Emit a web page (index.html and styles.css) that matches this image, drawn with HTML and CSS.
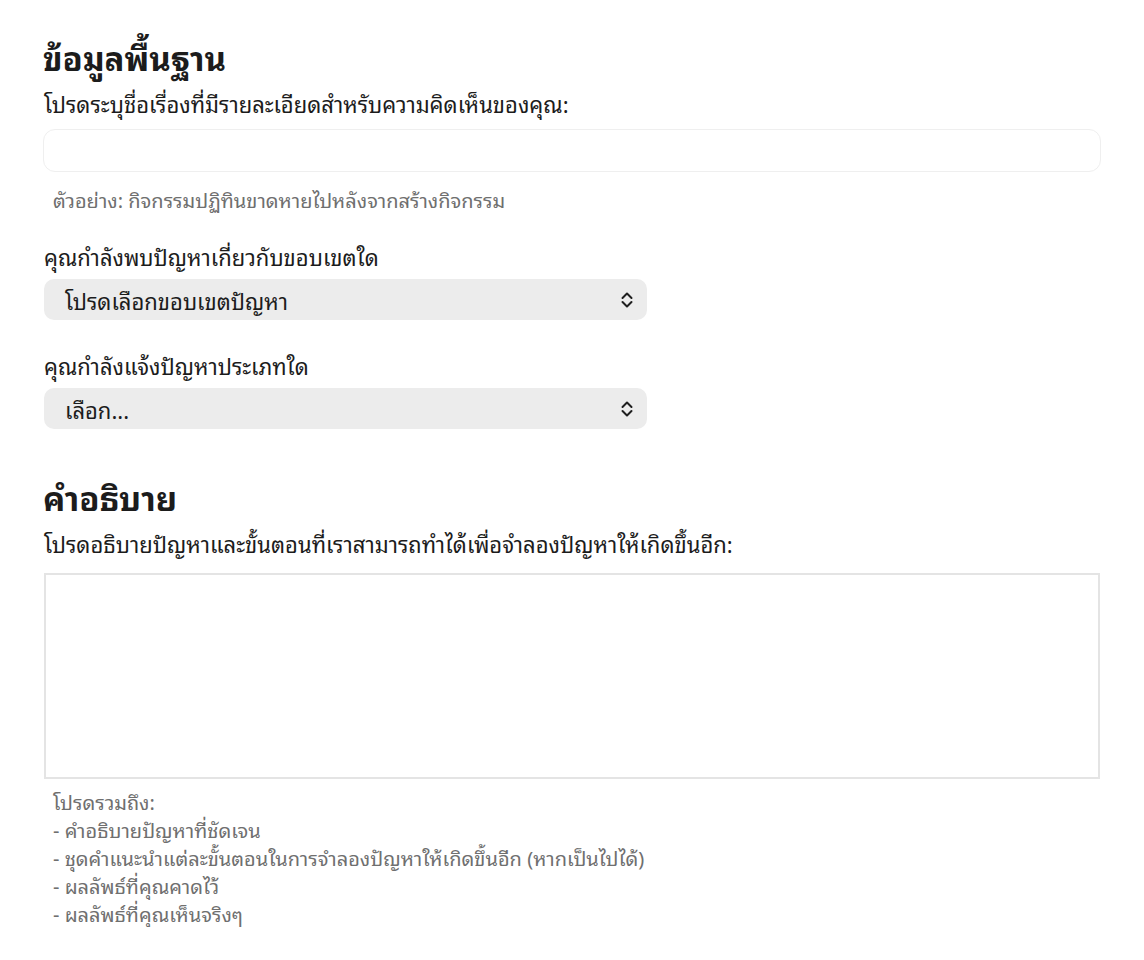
FILE: index.html
```html
<!DOCTYPE html>
<html lang="th">
<head>
<meta charset="utf-8">
<title>แบบฟอร์ม</title>
<link rel="stylesheet" href="styles.css">
</head>
<body>
<main class="form">
  <section class="section">
    <h2 class="section-title">ข้อมูลพื้นฐาน</h2>
    <label class="label label-first" for="title">โปรดระบุชื่อเรื่องที่มีรายละเอียดสำหรับความคิดเห็นของคุณ:</label>
    <input class="text-input" id="title" type="text">
    <p class="hint hint-single">ตัวอย่าง: กิจกรรมปฏิทินขาดหายไปหลังจากสร้างกิจกรรม</p>

    <label class="label label-gap" for="scope">คุณกำลังพบปัญหาเกี่ยวกับขอบเขตใด</label>
    <div class="select" id="scope">
      <span class="select-value">โปรดเลือกขอบเขตปัญหา</span>
      <svg class="chevrons" width="12" height="18" viewBox="0 0 12 18" aria-hidden="true"><path d="M1.5 7 L6 2.5 L10.5 7 M1.5 11 L6 15.5 L10.5 11" fill="none" stroke="#1f1f1f" stroke-width="2" stroke-linecap="round" stroke-linejoin="round"/></svg>
    </div>

    <label class="label label-gap" for="type">คุณกำลังแจ้งปัญหาประเภทใด</label>
    <div class="select" id="type">
      <span class="select-value">เลือก...</span>
      <svg class="chevrons" width="12" height="18" viewBox="0 0 12 18" aria-hidden="true"><path d="M1.5 7 L6 2.5 L10.5 7 M1.5 11 L6 15.5 L10.5 11" fill="none" stroke="#1f1f1f" stroke-width="2" stroke-linecap="round" stroke-linejoin="round"/></svg>
    </div>
  </section>

  <section class="section section-second">
    <h2 class="section-title">คำอธิบาย</h2>
    <label class="label label-first" for="desc">โปรดอธิบายปัญหาและขั้นตอนที่เราสามารถทำได้เพื่อจำลองปัญหาให้เกิดขึ้นอีก:</label>
    <textarea class="textarea" id="desc"></textarea>
    <div class="hint hint-list">
      <div class="hint-line">โปรดรวมถึง:</div>
      <div class="hint-line">- คำอธิบายปัญหาที่ชัดเจน</div>
      <div class="hint-line">- ชุดคำแนะนำแต่ละขั้นตอนในการจำลองปัญหาให้เกิดขึ้นอีก (หากเป็นไปได้)</div>
      <div class="hint-line">- ผลลัพธ์ที่คุณคาดไว้</div>
      <div class="hint-line">- ผลลัพธ์ที่คุณเห็นจริงๆ</div>
    </div>
  </section>
</main>
</body>
</html>
```

FILE: styles.css
```css
* { box-sizing: border-box; }
html, body { margin: 0; padding: 0; background: #fff; }
body {
  font-family: "Noto Sans Thai Looped", "Noto Sans", sans-serif;
  color: #1c1c1c;
}
.form {
  padding: 35px 44px 0 44px;
  display: flex;
  flex-direction: column;
}
.section { display: flex; flex-direction: column; }
.section-second { margin-top: 46px; }
.section-title {
  margin: 0 0 0 -1px;
  font-size: 33px;
  font-weight: 700;
  line-height: 44px;
  color: #1c1c1c;
}
.label {
  display: block;
  font-size: 22px;
  line-height: 30px;
  color: #1c1c1c;
}
.label-first { margin-top: 9px; }
.label-gap { margin-top: 28px; }
.text-input {
  margin-top: 11px;
  margin-left: -1px;
  width: 1058px;
  height: 43px;
  border: 1px solid #efefef;
  border-radius: 12px;
  background: #fff;
  outline: none;
  font: inherit;
}
.hint {
  margin: 0 0 0 9px;
  font-size: 20px;
  line-height: 28px;
  color: #6f6f6f;
}
.hint-single { margin-top: 13px; }
.select {
  margin-top: 8px;
  width: 603px;
  height: 41px;
  background: #ececec;
  border-radius: 10px;
  display: flex;
  align-items: center;
  justify-content: space-between;
  padding: 0 14px 0 21px;
  font-size: 22px;
}
.select + .label-gap { margin-top: 30px; }
.select-value { color: #1c1c1c; }
.chevrons { display: block; }
.textarea {
  margin-top: 15px;
  width: 1056px;
  height: 206px;
  border: 2px solid #e4e4e4;
  border-radius: 0;
  resize: none;
  outline: none;
  font: inherit;
  background: #fff;
}
.hint-list { margin-top: 8px; display: flex; flex-direction: column; }
.hint-line { line-height: 28px; }
```
